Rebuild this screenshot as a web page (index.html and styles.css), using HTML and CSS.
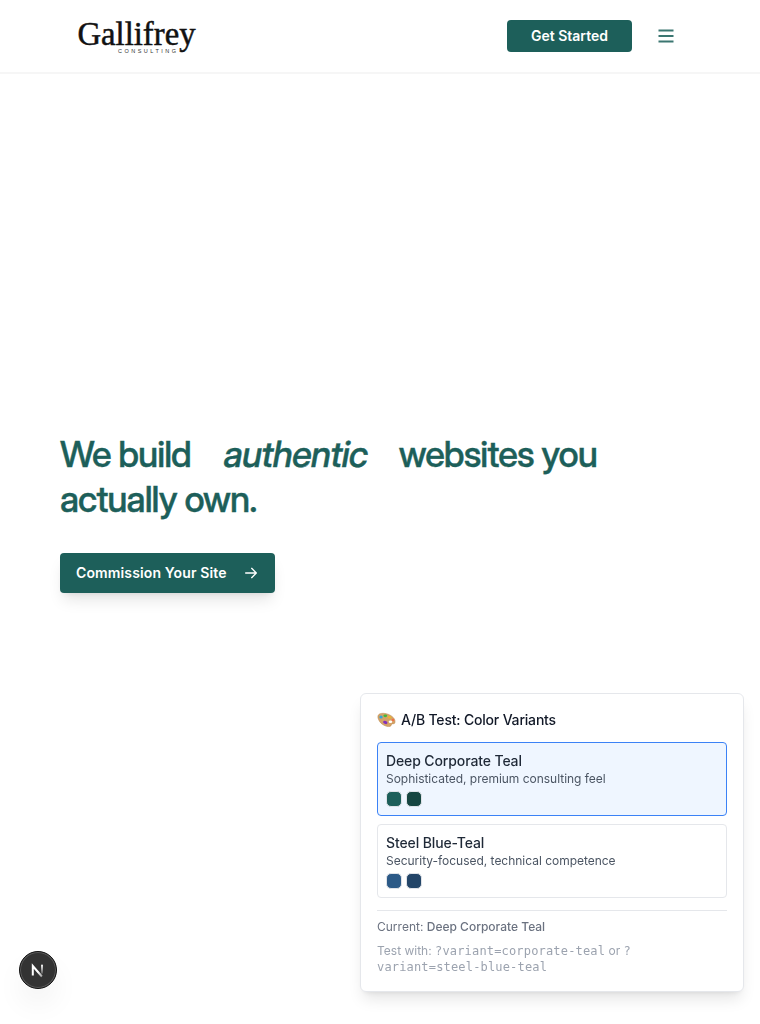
FILE: index.html
```html
<!DOCTYPE html>
<html lang="en">
<head>
<meta charset="utf-8">
<title>Gallifrey Consulting</title>
<link rel="stylesheet" href="styles.css">
</head>
<body>
<header class="header">
  <a class="logo" aria-label="Gallifrey Consulting">
    <svg width="122" height="44" viewBox="0 0 122 44">
      <text class="logo-name" x="1.500" y="31.300" textLength="118" lengthAdjust="spacingAndGlyphs">Gallifrey</text>
      <text class="logo-sub" x="42" y="39.300" textLength="58" lengthAdjust="spacing">CONSULTING</text>
    </svg>
  </a>
  <div class="header-actions">
    <button class="btn-start">Get Started</button>
    <svg class="menu" width="20" height="20" viewBox="0 0 20 20"><path d="M2.500 4.500h15M2.500 10h15M2.500 15.500h15"/></svg>
  </div>
</header>
<main class="hero">
  <h1 class="title"><span class="w1">We build</span> <em>authentic</em> <span class="w2">websites you</span><br><span class="w3">actually own.</span></h1>
  <button class="btn-commission"><span>Commission Your Site</span>
    <svg width="16" height="16" viewBox="0 0 24 24"><path d="M4 12h16M13 5l7 7-7 7"/></svg>
  </button>
</main>
<aside class="panel">
  <h2 class="panel-title">
    <svg width="19" height="16" viewBox="0 0 19 16">
      <path class="palette" d="M1 3.800C2 .8 7 .8 11 2.200c4.500 1.700 7.600 4.800 7 8.200-.3 1.600-1.800 1.300-2.800 1.500-1.300.3-.5 2.100-2.200 2.500C9.500 15.200 4 12.500 2 8.500 1.200 7 .6 5.400 1 3.800Z"/>
      <ellipse cx="13.500" cy="9.800" rx="1.800" ry="1.300" fill="#fff"/>
      <ellipse cx="4" cy="5" rx="1.700" ry="1.500" fill="#35a5d8"/>
      <ellipse cx="8.300" cy="3.800" rx="1.900" ry="1.400" fill="#43b936"/>
      <ellipse cx="12.500" cy="5.200" rx="1.600" ry="1.200" fill="#edb52d"/>
      <ellipse cx="16" cy="8" rx="1.300" ry="1.200" fill="#ee7048"/>
      <ellipse cx="8.300" cy="10.400" rx="2.300" ry="1.500" transform="rotate(25 8.300 10.400)" fill="#8230bd"/>
    </svg>
    <span>A/B Test: Color Variants</span>
  </h2>
  <div class="variants">
    <div class="variant active">
      <div class="name">Deep Corporate Teal</div>
      <div class="desc">Sophisticated, premium consulting feel</div>
      <div class="swatches"><i class="sw teal"></i><i class="sw teal-dark"></i></div>
    </div>
    <div class="variant">
      <div class="name">Steel Blue-Teal</div>
      <div class="desc">Security-focused, technical competence</div>
      <div class="swatches"><i class="sw blue"></i><i class="sw blue-dark"></i></div>
    </div>
  </div>
  <div class="panel-foot">
    <div class="current">Current: <strong>Deep Corporate Teal</strong></div>
    <div class="test">Test with: <code>?variant=corporate-teal</code> or <code>?<br>variant=steel-blue-teal</code></div>
  </div>
</aside>
<div class="dev-badge">
  <svg width="38" height="38" viewBox="0 0 38 38">
    <defs>
      <linearGradient id="fade" gradientUnits="userSpaceOnUse" x1="0" y1="13" x2="0" y2="25"><stop offset="0" stop-color="#fff"/><stop offset="1" stop-color="#fff" stop-opacity="0"/></linearGradient>
      <linearGradient id="diag" gradientUnits="userSpaceOnUse" x1="20" y1="20" x2="26" y2="27"><stop offset="0" stop-color="#fff"/><stop offset="1" stop-color="#fff" stop-opacity=".3"/></linearGradient>
    </defs>
    <path d="M13.800 24.600V15L22.900 25.500" fill="none" stroke="url(#diag)" stroke-width="2"/>
    <rect x="22" y="13.700" width="2" height="9" fill="url(#fade)"/>
  </svg>
</div>
</body>
</html>
```
FILE: styles.css
```css
* { box-sizing: border-box; }
body {
  margin: 0;
  height: 1024px;
  overflow: hidden;
  background: #fff;
  font-family: Inter, "Liberation Sans", sans-serif;
  -webkit-font-smoothing: antialiased;
}
button { border: 0; font-family: inherit; color: #fff; background: #1d5f5a; }
.header {
  height: 74px;
  padding: 0 84px 0 76px;
  border-bottom: 2px solid #f6f6f6;
  display: flex;
  align-items: center;
  justify-content: space-between;
}
.logo { display: flex; }
.logo svg { overflow: visible; }
.logo-name { font: 33px "Liberation Serif", serif; fill: #111; stroke: #111; stroke-width: .5px; }
.logo-sub { font: 5.500px "Liberation Sans", sans-serif; fill: #333; }
.header-actions { display: flex; align-items: center; gap: 24px; }
.btn-start {
  width: 125px;
  height: 32px;
  padding: 0 0 1px;
  border-radius: 4px;
  font-size: 14px;
  font-weight: 600;
}
.menu path { fill: none; stroke: #3b7671; stroke-width: 1.800; }
.hero { padding: 358px 60px 0; }
.title {
  margin: 0 0 31px;
  color: #1d5f5a;
  font-family: "Inter Display", Inter, sans-serif;
  font-optical-sizing: auto;
  font-variation-settings: "opsz" 32;
  font-size: 36px;
  line-height: 45px;
  font-weight: 500;
  letter-spacing: -.94px;
  -webkit-text-stroke: .4px #1d5f5a;
}
/* Slanted upright letters keep the double-storey "a". */
.title em {
  display: inline-block;
  margin: 0 26px 0 23px;
  font-style: normal;
  letter-spacing: -.7px;
  transform: skewX(-10deg);
  transform-origin: 50% 78%;
}
.btn-commission {
  display: flex;
  align-items: center;
  justify-content: space-between;
  width: 215px;
  height: 40px;
  padding: 0 16px;
  border-radius: 4px;
  font-size: 14px;
  font-weight: 600;
  letter-spacing: .13px;
  box-shadow: 0 10px 15px -3px rgba(0,0,0,.1), 0 4px 6px -4px rgba(0,0,0,.1);
}
.btn-commission span { padding-bottom: 1px; }
.btn-commission path { fill: none; stroke: #fff; stroke-width: 2; stroke-linecap: round; stroke-linejoin: round; }
.panel {
  position: fixed;
  left: 360px;
  top: 693px;
  width: 384px;
  height: 299px;
  padding: 16px;
  background: #fff;
  border: 1px solid #e5e7eb;
  border-radius: 6px;
  box-shadow: 0 10px 15px -3px rgba(0,0,0,.1), 0 4px 6px -4px rgba(0,0,0,.1);
}
.panel-title {
  display: flex;
  align-items: center;
  gap: 5px;
  margin: 0 0 12px;
  height: 20px;
  font-size: 14px;
  line-height: 20px;
  font-weight: 500;
  letter-spacing: -.19px;
  color: #111827;
}
.palette { fill: #d5a366; stroke: #b88850; stroke-width: .5; }
.variants { display: grid; gap: 8px; }
.variant { height: 74px; padding: 8px; border: 1px solid #e5e7eb; border-radius: 4px; }
.variant.active { border-color: #3b82f6; background: #eff6ff; }
.name { font-size: 14px; line-height: 20px; font-weight: 500; letter-spacing: -.12px; color: #1f2937; }
.desc { font-size: 12px; line-height: 16px; letter-spacing: -.02px; color: #4b5563; }
.swatches { display: flex; gap: 4px; margin-top: 4px; }
.sw { width: 16px; height: 16px; border: 1px solid #e0e3e8; border-radius: 5px; }
.teal { background: #1d5f5a; }
.teal-dark { background: #164641; }
.blue { background: #2c5a87; }
.blue-dark { background: #234568; }
.panel-foot { margin-top: 12px; padding-top: 8px; border-top: 1px solid #e5e7eb; font-size: 12px; line-height: 16px; }
.current { color: #6b7280; }
.current strong { font-weight: 500; }
.test { margin-top: 8px; color: #9ca3af; white-space: nowrap; }
.test code { font: 12px/16px "DejaVu Sans Mono", monospace; letter-spacing: .17px; }
.dev-badge {
  position: fixed;
  left: 19px;
  top: 951px;
  width: 38px;
  height: 38px;
  border-radius: 50%;
  background: #333;
  border: 1px solid #111;
  box-shadow: inset 0 0 0 1px #5a5a5a, 0 16px 32px -8px rgba(0,0,0,.14);
}
.dev-badge svg { display: block; margin: -1px; }
```
